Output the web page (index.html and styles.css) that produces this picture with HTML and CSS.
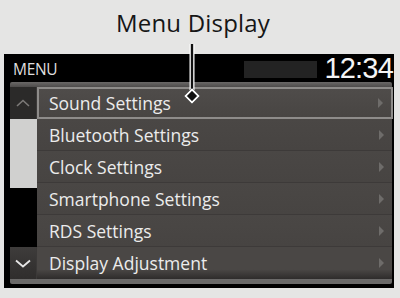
FILE: index.html
```html
<!DOCTYPE html>
<html lang="en">
<head>
  <meta charset="UTF-8" />
  <title>Menu Display</title>
  <link rel="stylesheet" href="styles.css">
</head>
<body>
  <div class="callout">Menu Display</div>

  <div class="screen">
    <div class="header">
      <span class="header-title">MENU</span>
      <div class="header-right">
        <div class="status-box"></div>
        <span class="clock">12:34</span>
      </div>
    </div>

    <div class="panel">
      <div class="panel-band"></div>
      <div class="panel-body">
        <div class="scroll-col">
          <div class="scroll-btn">
            <svg width="14" height="8" viewBox="0 0 14 8"><path d="M1 7 L7 1.5 L13 7" fill="none" stroke="#7c7a78" stroke-width="1.6"/></svg>
          </div>
          <div class="scroll-track">
            <div class="scroll-thumb"></div>
          </div>
          <div class="scroll-btn scroll-btn-down">
            <svg width="16" height="9" viewBox="0 0 16 9"><path d="M1 1.5 L8 7.5 L15 1.5" fill="none" stroke="#e6e6e6" stroke-width="1.8"/></svg>
          </div>
        </div>
        <ul class="menu-list">
          <li class="menu-item active">Sound Settings<span class="arrow"></span></li>
          <li class="menu-item">Bluetooth Settings<span class="arrow"></span></li>
          <li class="menu-item">Clock Settings<span class="arrow"></span></li>
          <li class="menu-item">Smartphone Settings<span class="arrow"></span></li>
          <li class="menu-item">RDS Settings<span class="arrow"></span></li>
          <li class="menu-item">Display Adjustment<span class="arrow"></span></li>
        </ul>
      </div>
      <div class="panel-band panel-band-bottom"></div>
    </div>
  </div>

  <!-- callout pointer lies over the screen -->
  <svg class="pointer" width="400" height="298" viewBox="0 0 400 298">
    <line x1="192" y1="44" x2="192" y2="90" stroke="#ffffff" stroke-width="5"/>
    <line x1="192" y1="44" x2="192" y2="90" stroke="#111111" stroke-width="2.4"/>
    <polygon points="192,88 200,96 192,104 184,96" fill="#111111"/>
    <polygon points="192,89.5 198.5,96 192,102.5 185.5,96" fill="#111111" stroke="#ffffff" stroke-width="1.8"/>
  </svg>
</body>
</html>
```

FILE: styles.css
```css
* {
  box-sizing: border-box;
  margin: 0;
  padding: 0;
}

body {
  width: 400px;
  height: 298px;
  background-color: #e5e5e4;
  font-family: 'Open Sans', 'Noto Sans', sans-serif;
  position: relative;
  overflow: hidden;
}

.callout {
  height: 54px;
  padding-top: 6px;
  padding-right: 14px;
  text-align: center;
  font-size: 24px;
  color: #161616;
  letter-spacing: 0.2px;
}

.screen {
  margin-left: 4px;
  width: 390px;
  height: 234px;
  background-color: #000000;
  padding: 0 2px 4px 6px;
  display: flex;
  flex-direction: column;
}

.header {
  height: 28px;
  display: flex;
  justify-content: space-between;
  align-items: center;
  padding-left: 3px;
}

.header-title {
  color: #dedede;
  font-size: 15.5px;
  letter-spacing: -0.3px;
  padding-top: 2px;
}

.header-right {
  display: flex;
  align-items: center;
  gap: 7px;
}

.status-box {
  width: 73px;
  height: 17px;
  background-color: #232323;
  margin-top: 2px;
}

.clock {
  color: #f4f4f4;
  font-family: 'Liberation Sans', Arial, sans-serif;
  font-size: 29px;
  line-height: 28px;
  letter-spacing: -0.8px;
  margin-right: -1px;
}

.panel {
  flex: 1;
  display: flex;
  flex-direction: column;
}

.panel-band {
  height: 5px;
  background: linear-gradient(#6a6867, #4e4c4b);
  border-radius: 2px 2px 0 0;
}

.panel-band-bottom {
  height: 5px;
  background: #6b6a69;
  border-radius: 0 0 2px 2px;
}

.panel-body {
  display: flex;
  height: 192px;
}

.scroll-col {
  width: 27px;
  display: flex;
  flex-direction: column;
}

.scroll-btn {
  height: 32px;
  background-color: #2b2a29;
  display: flex;
  align-items: center;
  justify-content: center;
  border-right: 1px solid #3b3938;
}

.scroll-btn-down {
  background: linear-gradient(#3e3c3b, #2f2d2c);
}

.scroll-track {
  flex: 1;
  background-color: #000000;
}

.scroll-thumb {
  height: 69px;
  background-color: #d0d0cf;
}

.menu-list {
  flex: 1;
  list-style: none;
  background-color: #484543;
}

.menu-item {
  height: 32px;
  display: flex;
  align-items: center;
  justify-content: space-between;
  padding: 0 8px 0 12px;
  color: #ececec;
  font-size: 17.5px;
  border-bottom: 1px solid #3d3a39;
  background: linear-gradient(#4a4745, #474442);
}

.menu-item:last-child {
  border-bottom: none;
  background: linear-gradient(#4a4745 70%, #2e2c2b);
}

.menu-item.active {
  border: 2px solid #8e8c8a;
  padding-left: 10px;
  margin-right: -1px;
  background: linear-gradient(#4f4c4a, #484543);
}

.arrow {
  width: 0;
  height: 0;
  border-top: 5px solid transparent;
  border-bottom: 5px solid transparent;
  border-left: 5px solid #6e6c6a;
}

.pointer {
  position: absolute;
  left: 0;
  top: 0;
  pointer-events: none;
}
```
